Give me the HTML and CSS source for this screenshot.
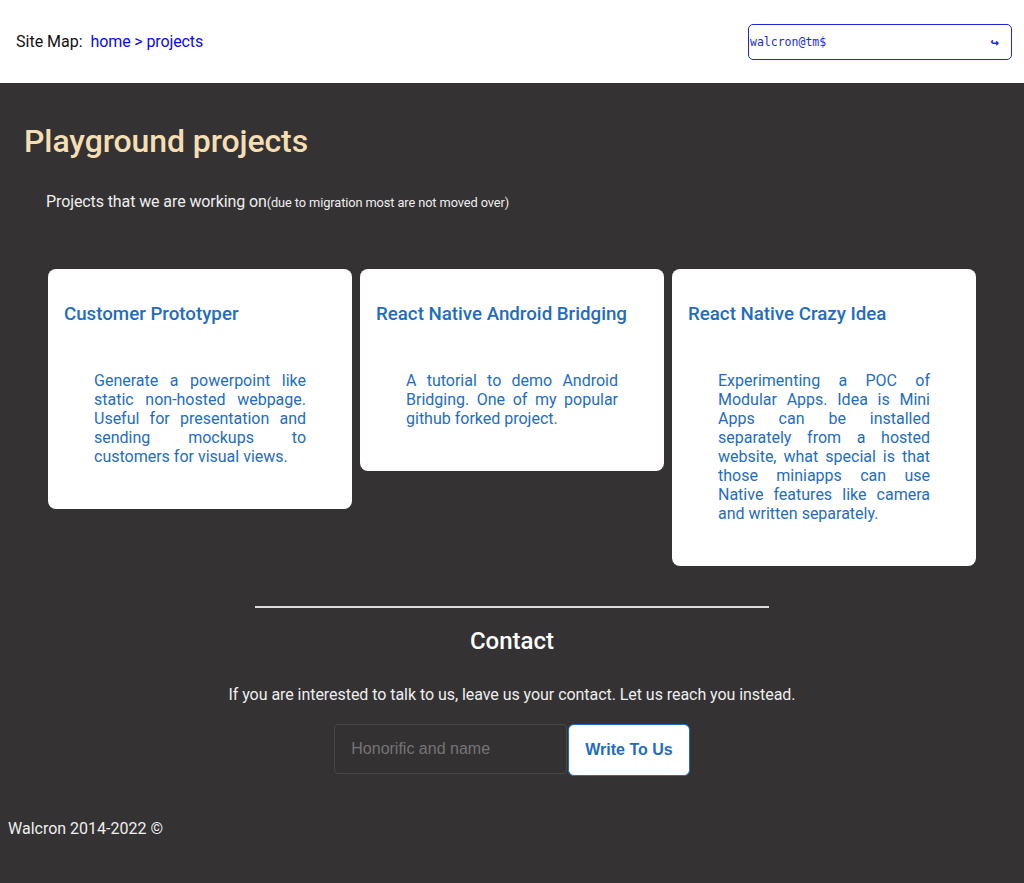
FILE: index.html
```html
<!DOCTYPE html>
<html lang="en">
<head>
<meta charset="utf-8">
<title>Playground projects</title>
<link rel="stylesheet" href="styles.css">
</head>
<body>
<header class="topbar">
  <nav class="sitemap">Site Map:&nbsp; <a href="#">home &gt; projects</a></nav>
  <div class="terminal">
    <span class="prompt">walcron@tm$</span>
    <span class="enter">&#8618;</span>
  </div>
</header>
<main class="page">
  <h1 class="title">Playground projects</h1>
  <p class="subtitle">Projects that we are working on<small>(due to migration most are not moved over)</small></p>
  <section class="cards">
    <article class="card">
      <h3 class="card-title">Customer Prototyper</h3>
      <p class="card-text">Generate a powerpoint like static non-hosted webpage. Useful for presentation and sending mockups to customers for visual views.</p>
    </article>
    <article class="card">
      <h3 class="card-title">React Native Android Bridging</h3>
      <p class="card-text">A tutorial to demo Android Bridging. One of my popular github forked project.</p>
    </article>
    <article class="card">
      <h3 class="card-title">React Native Crazy Idea</h3>
      <p class="card-text">Experimenting a POC of Modular Apps. Idea is Mini Apps can be installed separately from a hosted website, what special is that those miniapps can use Native features like camera and written separately.</p>
    </article>
  </section>
  <section class="contact">
    <hr class="divider">
    <h2 class="contact-title">Contact</h2>
    <p class="contact-text">If you are interested to talk to us, leave us your contact. Let us reach you instead.</p>
    <form class="contact-form">
      <input class="contact-input" type="text" placeholder="Honorific and name">
      <button class="contact-button" type="button">Write To Us</button>
    </form>
  </section>
  <footer class="footer">Walcron 2014-2022 &copy;</footer>
</main>
</body>
</html>
```
FILE: styles.css
```css
html, body {
  margin: 0;
  padding: 0;
  background: #343233;
  font-family: Roboto, "Liberation Sans", sans-serif;
}

.topbar {
  display: flex;
  justify-content: space-between;
  align-items: center;
  height: 83px;
  padding: 0 12px 0 16px;
  background: #ffffff;
  box-sizing: border-box;
}

.sitemap {
  font-size: 16px;
  color: #111;
}

.sitemap a {
  color: #0a0aee;
  text-decoration: none;
  letter-spacing: -0.12px;
}

.terminal {
  display: flex;
  align-items: center;
  justify-content: space-between;
  width: 264px;
  height: 36px;
  box-sizing: border-box;
  border: 1px solid #1a2bd6;
  border-radius: 5px;
  padding: 0 12px 0 1px;
  background: #fff;
  font-family: "DejaVu Sans Mono", monospace;
  font-size: 11.5px;
  color: #1a2bd6;
}

.enter {
  font-size: 14px;
  font-weight: bold;
}

.page {
  padding: 39px 0 0;
  min-height: 800px;
}

.title {
  margin: 0 0 0 24px;
  font-size: 32px;
  font-weight: 500;
  color: #f5deb3;
  line-height: 38px;
  letter-spacing: -0.1px;
}

.subtitle {
  margin: 32px 0 0 46px;
  font-size: 16px;
  color: #eeeeee;
  line-height: 19px;
  letter-spacing: -0.1px;
}

.subtitle small {
  font-size: 12.8px;
}

.cards {
  display: flex;
  justify-content: center;
  align-items: flex-start;
  gap: 8px;
  margin-top: 57px;
}

.card {
  width: 304px;
  box-sizing: border-box;
  background: #fff;
  border-radius: 8px;
  padding: 34px 16px 43px;
  color: #1f6dbf;
}

.card-title {
  margin: 0;
  font-size: 18.72px;
  font-weight: 500;
  line-height: 22px;
}

.card-text {
  margin: 46px 30px 0;
  font-size: 16px;
  line-height: 19px;
  text-align: justify;
}

.contact {
  display: flex;
  flex-direction: column;
  align-items: center;
  margin-top: 40px;
}

.divider {
  width: 514px;
  margin: 0;
  border: 0;
  height: 2px;
  background: #dcdcdc;
}

.contact-title {
  margin: 19px 0 0;
  font-size: 24px;
  font-weight: 500;
  line-height: 28px;
  color: #ffffff;
}

.contact-text {
  margin: 30px 0 0;
  font-size: 16px;
  line-height: 19px;
  color: #eeeeee;
  letter-spacing: -0.05px;
}

.contact-form {
  display: flex;
  align-items: flex-start;
  margin-top: 20px;
}

.contact-input {
  width: 233px;
  height: 50px;
  box-sizing: border-box;
  background: #333132;
  border: 1px solid #484647;
  border-radius: 4px;
  padding: 0 16px;
  font-family: "Liberation Sans", Arial, sans-serif;
  font-size: 16px;
  color: #eee;
}

.contact-input::placeholder {
  color: #767476;
}

.contact-button {
  height: 52px;
  margin-left: 1px;
  padding: 0 16px;
  background: #ffffff;
  border: 1px solid #1f6dbf;
  border-radius: 6px;
  font-family: "Liberation Sans", Arial, sans-serif;
  font-size: 16px;
  font-weight: bold;
  color: #1f6dbf;
}

.footer {
  margin-top: 43px;
  padding: 0 8px;
  font-size: 16px;
  line-height: 19px;
  color: #eeeeee;
}
```
